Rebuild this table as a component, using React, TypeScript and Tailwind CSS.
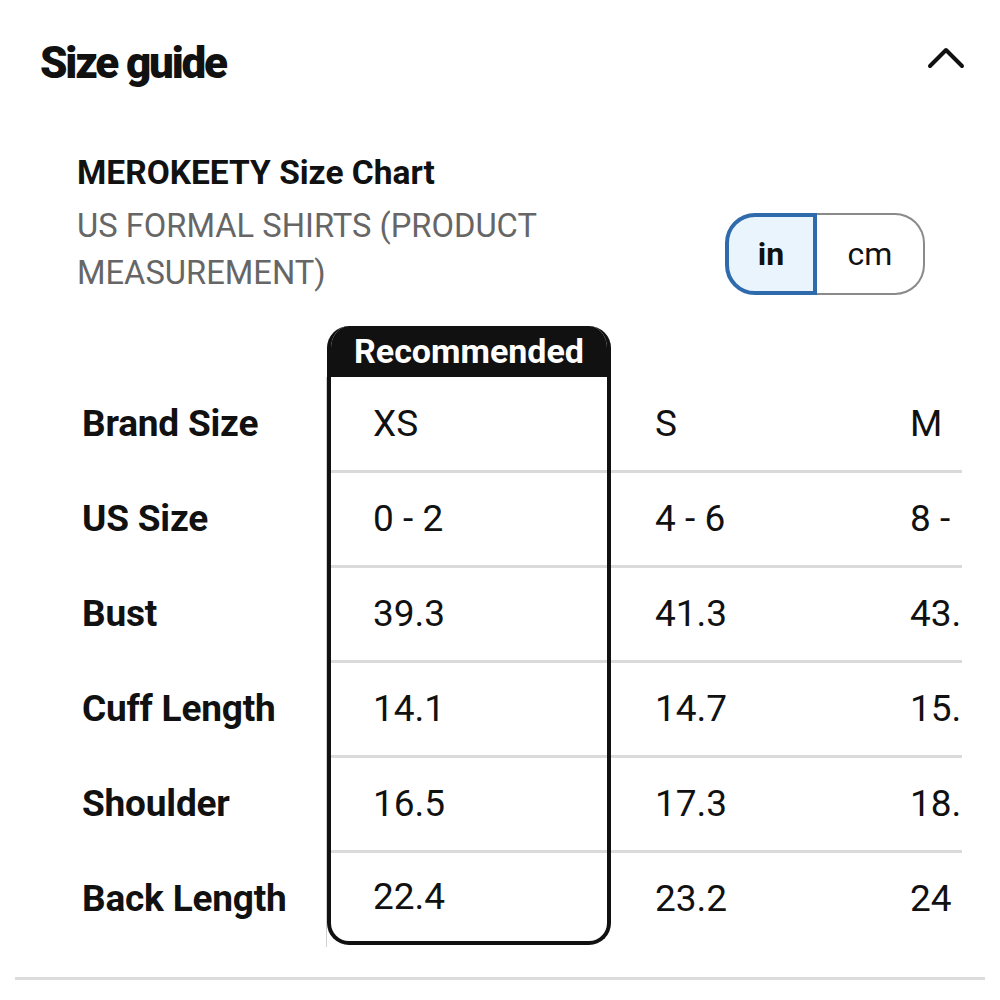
import React from "react";

const rows = [
  { label: "Brand Size", values: ["XS", "S", "M"] },
  { label: "US Size", values: ["0 - 2", "4 - 6", "8 - 10"] },
  { label: "Bust", values: ["39.3", "41.3", "43.3"] },
  { label: "Cuff Length", values: ["14.1", "14.7", "15.3"] },
  { label: "Shoulder", values: ["16.5", "17.3", "18.1"] },
  { label: "Back Length", values: ["22.4", "23.2", "24"] },
];

function Cell({ i, children, pad, last }: { i: number; children: React.ReactNode; pad: string; last?: boolean }) {
  const h = i === 0 ? "h-[93px]" : last ? "h-[91px] border-t-[3px] border-[#dadada]" : "h-[95px] border-t-[3px] border-[#dadada]";
  return (
    <div className={`flex items-center ${h} ${pad} text-[37px] text-[#111] whitespace-nowrap`}>
      {children}
    </div>
  );
}

export default function App() {
  return (
    <div
      className="w-[1000px] h-[1000px] bg-white overflow-hidden"
      style={{ fontFamily: "Roboto, 'Liberation Sans', sans-serif" }}
    >
      <div className="mx-[15px] border-b-[3px] border-[#dcdcdc] pb-[30px]">
        {/* Header */}
        <div className="h-[126px] flex items-center justify-between pl-[25px] pr-[20px]">
          <h2 className="text-[44px] font-black tracking-tighter text-[#111]">Size guide</h2>
          <svg width="38" height="22" viewBox="0 0 38 22" className="-mt-[11px]">
            <polyline points="3,19 19,3 35,19" fill="none" stroke="#111" strokeWidth="4" strokeLinecap="round" strokeLinejoin="round" />
          </svg>
        </div>

        {/* Body */}
        <div className="pl-[62px]">
          <div className="mt-[27px] text-[33.5px] leading-[40px] font-bold text-[#111]">MEROKEETY Size Chart</div>
          <div className="mt-[10px] flex justify-between items-start pr-[60px]">
            <div className="text-[32.7px] leading-[47px] text-[#666] w-[520px]">
              US FORMAL SHIRTS (PRODUCT MEASUREMENT)
            </div>
            <div className="mt-[10px] flex">
              <div className="w-[92px] h-[82px] rounded-l-[30px] border-[4px] border-[#2f6aad] bg-[#e9f4fd] flex items-center justify-center text-[32px] font-bold text-[#111]">
                in
              </div>
              <div className="w-[108px] h-[82px] rounded-r-[30px] border-[2px] border-l-0 border-[#8a8a8a] flex items-center justify-center text-[32px] text-[#111]">
                cm
              </div>
            </div>
          </div>
        </div>

        {/* Table */}
        <div className="ml-[67px] mt-[29px] w-[880px] overflow-hidden flex">
          {/* Label column */}
          <div className="w-[245px] shrink-0">
            <div className="h-[51px]" />
            <div className="border-r border-[#d0d0d0] pb-[2px]">
              {rows.map((r, i) => (
                <div
                  key={r.label}
                  className={`flex items-center ${i === 0 ? "h-[93px]" : "h-[95px] pt-[3px]"} text-[37px] font-bold tracking-[-0.2px] text-[#111] whitespace-nowrap`}
                >
                  {r.label}
                </div>
              ))}
            </div>
          </div>

          {/* Recommended column */}
          <div className="w-[284px] shrink-0 rounded-[22px] border-[4px] border-t-0 border-[#111] overflow-hidden self-start">
            <div className="h-[51px] bg-[#111] flex items-center justify-center text-[34px] font-bold text-white">
              Recommended
            </div>
            {rows.map((r, i) => (
              <Cell key={r.label} i={i} pad="pl-[42px]" last={i === rows.length - 1}>
                {r.values[0]}
              </Cell>
            ))}
          </div>

          {/* Other columns */}
          {[1, 2].map((c) => (
            <div key={c} className="w-[255px] shrink-0">
              <div className="h-[51px]" />
              {rows.map((r, i) => (
                <Cell key={r.label} i={i} pad="pl-[44px]">
                  {r.values[c]}
                </Cell>
              ))}
            </div>
          ))}
        </div>
      </div>
    </div>
  );
}
